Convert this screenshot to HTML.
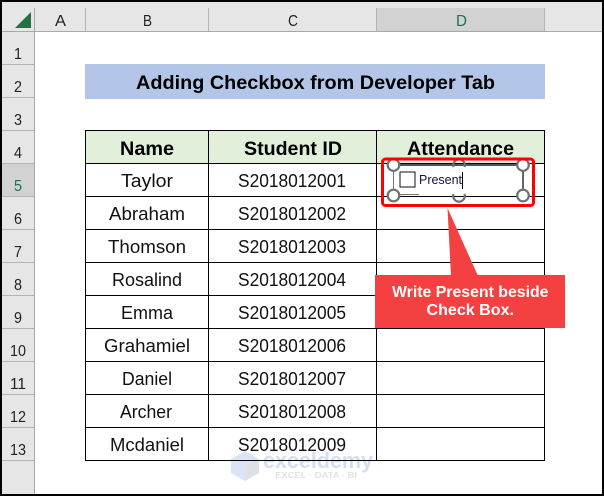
<!DOCTYPE html>
<html><head><meta charset="utf-8"><style>
html,body{margin:0;padding:0;background:#fff}
svg{display:block}
text{font-family:"Liberation Sans",sans-serif;fill:#000}
.h{font-size:16px;fill:#222}
.c{font-size:18px;fill:#111}
.b{font-size:19px;font-weight:bold}
</style></head><body>
<svg width="604" height="496" viewBox="0 0 604 496" xmlns="http://www.w3.org/2000/svg" shape-rendering="crispEdges">
<rect width="604" height="496" fill="#000"/>
<rect x="2" y="2" width="600" height="492" fill="#fff"/>
<!-- headers -->
<rect x="2" y="2" width="600" height="29" fill="#e6e6e6"/>
<rect x="2" y="2" width="32" height="492" fill="#e6e6e6"/>
<rect x="377" y="8" width="167" height="23" fill="#d2d2d2"/>
<rect x="2" y="164" width="32" height="32" fill="#d2d2d2"/>
<rect x="2" y="31" width="600" height="1" fill="#a8a8a8"/>
<rect x="34" y="8" width="1" height="486" fill="#a8a8a8"/>
<g fill="#b4b4b4">
<rect x="85" y="8" width="1" height="23"/><rect x="208" y="8" width="1" height="23"/><rect x="376" y="8" width="1" height="23"/><rect x="544" y="8" width="1" height="23"/>
<rect x="2" y="64" width="32" height="1"/><rect x="2" y="97" width="32" height="1"/><rect x="2" y="130" width="32" height="1"/><rect x="2" y="163" width="32" height="1"/><rect x="2" y="196" width="32" height="1"/><rect x="2" y="229" width="32" height="1"/><rect x="2" y="262" width="32" height="1"/><rect x="2" y="295" width="32" height="1"/><rect x="2" y="328" width="32" height="1"/><rect x="2" y="361" width="32" height="1"/><rect x="2" y="394" width="32" height="1"/><rect x="2" y="427" width="32" height="1"/><rect x="2" y="460" width="32" height="1"/>
</g>
<polygon points="15,28 31,28 31,12" fill="#217346" shape-rendering="auto"/>
<text class="h" x="55" y="26" textLength="11" lengthAdjust="spacingAndGlyphs">A</text>
<text class="h" x="143" y="26" textLength="9" lengthAdjust="spacingAndGlyphs">B</text>
<text class="h" x="288" y="26" textLength="10" lengthAdjust="spacingAndGlyphs">C</text>
<text class="h" x="456" y="26" textLength="11" lengthAdjust="spacingAndGlyphs" style="fill:#1f6e5a">D</text>
<text class="h" x="14" y="59" textLength="8" lengthAdjust="spacingAndGlyphs">1</text>
<text class="h" x="14" y="92" textLength="8" lengthAdjust="spacingAndGlyphs">2</text>
<text class="h" x="14" y="125" textLength="8" lengthAdjust="spacingAndGlyphs">3</text>
<text class="h" x="14" y="158" textLength="8" lengthAdjust="spacingAndGlyphs">4</text>
<text class="h" x="14" y="191" textLength="8" lengthAdjust="spacingAndGlyphs" style="fill:#1f6e5a">5</text>
<text class="h" x="14" y="224" textLength="8" lengthAdjust="spacingAndGlyphs">6</text>
<text class="h" x="14" y="257" textLength="8" lengthAdjust="spacingAndGlyphs">7</text>
<text class="h" x="14" y="290" textLength="8" lengthAdjust="spacingAndGlyphs">8</text>
<text class="h" x="14" y="323" textLength="8" lengthAdjust="spacingAndGlyphs">9</text>
<text class="h" x="10" y="356" textLength="16" lengthAdjust="spacingAndGlyphs">10</text>
<text class="h" x="10" y="389" textLength="16" lengthAdjust="spacingAndGlyphs">11</text>
<text class="h" x="10" y="422" textLength="16" lengthAdjust="spacingAndGlyphs">12</text>
<text class="h" x="10" y="455" textLength="16" lengthAdjust="spacingAndGlyphs">13</text>
<!-- watermark -->
<g shape-rendering="auto">
<polygon points="245,451 259,459 259,473 245,481 231,473 231,459" fill="#dbe4f5"/>
<polygon points="245,466 259,459 259,473 245,481" fill="#dfdfe6"/>
<text x="263" y="468" style="font-size:22px;font-weight:bold;fill:#d3def2" textLength="110" lengthAdjust="spacingAndGlyphs">exceldemy</text>
<text x="275" y="478" style="font-size:8px;font-weight:bold;fill:#e2e2e2" textLength="82" lengthAdjust="spacingAndGlyphs">EXCEL · DATA · BI</text>
</g>
<!-- title -->
<rect x="85" y="64" width="460" height="35" fill="#b4c6e7"/>
<text class="b" x="136" y="89" textLength="359" lengthAdjust="spacingAndGlyphs">Adding Checkbox from Developer Tab</text>
<!-- table -->
<rect x="85" y="130" width="459" height="33" fill="#e2efda"/>
<g fill="#000">
<rect x="85" y="130" width="460" height="1"/><rect x="85" y="163" width="460" height="1"/><rect x="85" y="196" width="460" height="1"/><rect x="85" y="229" width="460" height="1"/><rect x="85" y="262" width="460" height="1"/><rect x="85" y="295" width="460" height="1"/><rect x="85" y="328" width="460" height="1"/><rect x="85" y="361" width="460" height="1"/><rect x="85" y="394" width="460" height="1"/><rect x="85" y="427" width="460" height="1"/><rect x="85" y="460" width="460" height="1"/>
<rect x="85" y="130" width="1" height="331"/><rect x="208" y="130" width="1" height="331"/><rect x="376" y="130" width="1" height="331"/><rect x="544" y="130" width="1" height="331"/>
</g>
<text class="b" x="120" y="155" textLength="54" lengthAdjust="spacingAndGlyphs">Name</text>
<text class="b" x="244" y="155" textLength="98" lengthAdjust="spacingAndGlyphs">Student ID</text>
<text class="b" x="407" y="155" textLength="107" lengthAdjust="spacingAndGlyphs">Attendance</text>
<text class="c" x="121" y="187" textLength="52" lengthAdjust="spacingAndGlyphs">Taylor</text>
<text class="c" x="109" y="220" textLength="76" lengthAdjust="spacingAndGlyphs">Abraham</text>
<text class="c" x="108" y="253" textLength="78" lengthAdjust="spacingAndGlyphs">Thomson</text>
<text class="c" x="112" y="286" textLength="70" lengthAdjust="spacingAndGlyphs">Rosalind</text>
<text class="c" x="121" y="319" textLength="52" lengthAdjust="spacingAndGlyphs">Emma</text>
<text class="c" x="104" y="352" textLength="86" lengthAdjust="spacingAndGlyphs">Grahamiel</text>
<text class="c" x="122" y="385" textLength="50" lengthAdjust="spacingAndGlyphs">Daniel</text>
<text class="c" x="120" y="418" textLength="52" lengthAdjust="spacingAndGlyphs">Archer</text>
<text class="c" x="110" y="451" textLength="74" lengthAdjust="spacingAndGlyphs">Mcdaniel</text>
<text class="c" x="238" y="187" textLength="108" lengthAdjust="spacingAndGlyphs">S2018012001</text>
<text class="c" x="238" y="220" textLength="108" lengthAdjust="spacingAndGlyphs">S2018012002</text>
<text class="c" x="238" y="253" textLength="108" lengthAdjust="spacingAndGlyphs">S2018012003</text>
<text class="c" x="238" y="286" textLength="108" lengthAdjust="spacingAndGlyphs">S2018012004</text>
<text class="c" x="238" y="319" textLength="108" lengthAdjust="spacingAndGlyphs">S2018012005</text>
<text class="c" x="238" y="352" textLength="108" lengthAdjust="spacingAndGlyphs">S2018012006</text>
<text class="c" x="238" y="385" textLength="108" lengthAdjust="spacingAndGlyphs">S2018012007</text>
<text class="c" x="238" y="418" textLength="108" lengthAdjust="spacingAndGlyphs">S2018012008</text>
<text class="c" x="238" y="451" textLength="108" lengthAdjust="spacingAndGlyphs">S2018012009</text>
<!-- form control -->
<rect x="393" y="164" width="130" height="2" fill="#555"/>
<rect x="393" y="165" width="1" height="30" fill="#777"/>
<rect x="522" y="165" width="2" height="24" fill="#666"/>
<rect x="400" y="194" width="19" height="1" fill="#777"/>
<rect x="400" y="172" width="15" height="15" fill="#fff" stroke="#111" stroke-width="1"/>
<text x="419" y="184" style="font-size:13px;fill:#1a1040" textLength="43" lengthAdjust="spacingAndGlyphs">Present</text>
<rect x="462" y="172" width="1" height="17" fill="#000"/>
<g shape-rendering="auto" fill="#fff" stroke="#707070" stroke-width="2.2">
<circle cx="393.5" cy="165" r="5.8"/><circle cx="523" cy="165" r="5.8"/>
<circle cx="393.5" cy="195.5" r="5.8"/><circle cx="523" cy="195.5" r="5.8"/>
<path d="M453.5,167 A5.8,5.8 0 1 1 464.5,167" fill="none"/>
<path d="M453.5,194 A5.8,5.8 0 1 0 464.5,194" fill="none"/>
</g>
<rect x="382.5" y="159" width="151" height="46.5" rx="3" fill="none" stroke="#ff0000" stroke-width="3" shape-rendering="auto"/>
<!-- callout -->
<polygon points="447.5,208 451,276 478,276" fill="#f44040" shape-rendering="auto"/>
<rect x="375" y="275" width="190" height="53" fill="#f44040"/>
<text x="392" y="297" shape-rendering="auto" style="font-size:15.5px;font-weight:bold;fill:#fff" textLength="156.5" lengthAdjust="spacingAndGlyphs">Write Present beside</text>
<text x="426.5" y="315" shape-rendering="auto" style="font-size:15.5px;font-weight:bold;fill:#fff" textLength="87.5" lengthAdjust="spacingAndGlyphs">Check Box.</text>
</svg>
</body></html>
